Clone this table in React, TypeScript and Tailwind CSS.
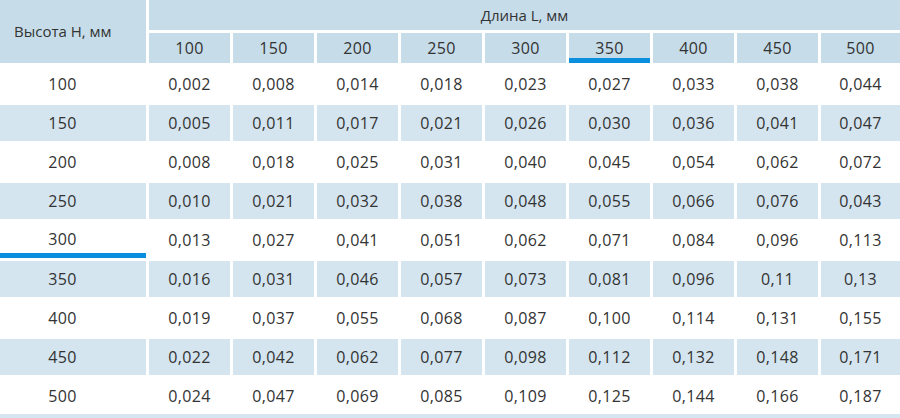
import React from "react";

const lengths = ["100", "150", "200", "250", "300", "350", "400", "450", "500"];

const rows: { h: string; v: string[] }[] = [
  { h: "100", v: ["0,002", "0,008", "0,014", "0,018", "0,023", "0,027", "0,033", "0,038", "0,044"] },
  { h: "150", v: ["0,005", "0,011", "0,017", "0,021", "0,026", "0,030", "0,036", "0,041", "0,047"] },
  { h: "200", v: ["0,008", "0,018", "0,025", "0,031", "0,040", "0,045", "0,054", "0,062", "0,072"] },
  { h: "250", v: ["0,010", "0,021", "0,032", "0,038", "0,048", "0,055", "0,066", "0,076", "0,043"] },
  { h: "300", v: ["0,013", "0,027", "0,041", "0,051", "0,062", "0,071", "0,084", "0,096", "0,113"] },
  { h: "350", v: ["0,016", "0,031", "0,046", "0,057", "0,073", "0,081", "0,096", "0,11", "0,13"] },
  { h: "400", v: ["0,019", "0,037", "0,055", "0,068", "0,087", "0,100", "0,114", "0,131", "0,155"] },
  { h: "450", v: ["0,022", "0,042", "0,062", "0,077", "0,098", "0,112", "0,132", "0,148", "0,171"] },
  { h: "500", v: ["0,024", "0,047", "0,069", "0,085", "0,109", "0,125", "0,144", "0,166", "0,187"] },
];

export default function App() {
  return (
    <div
      className="w-[900px] h-[418px] overflow-hidden bg-white text-[#333333] text-[16px] tracking-[0.4px]"
      style={{ fontFamily: '"Open Sans", "Noto Sans", sans-serif' }}
    >
      <div className="grid grid-cols-[146px_repeat(8,81px)_79px] gap-[3px] auto-rows-min">
        <div className="row-span-2 bg-[#c6dce9] flex items-center pl-[14px] text-[15px] tracking-normal">
          Высота H, мм
        </div>
        <div className="col-span-9 h-[30px] bg-[#c6dce9] flex items-center justify-center text-[15px] tracking-normal">
          Длина L, мм
        </div>
        {lengths.map((l) => (
          <div
            key={l}
            className={
              l === "350"
                ? "h-[30px] bg-[#c6dce9] flex items-center justify-center border-b-[5px] border-[#0a8fdf] pt-[5px]"
                : "h-[30px] bg-[#c6dce9] flex items-center justify-center"
            }
          >
            {l}
          </div>
        ))}
        {rows.map((r, i) => {
          const shaded = i % 2 === 1;
          const bg = shaded ? "bg-[#d4e5ef]" : "bg-white";
          return (
            <React.Fragment key={r.h}>
              <div
                className={
                  r.h === "300"
                    ? `h-[36px] ${bg} flex items-center justify-center pr-[21px] border-b-[5px] border-[#0a8fdf] pt-[3px]`
                    : `h-[36px] ${bg} flex items-center justify-center pr-[21px]`
                }
              >
                {r.h}
              </div>
              {r.v.map((v, j) => (
                <div key={j} className={`h-[36px] ${bg} flex items-center justify-center`}>
                  {v}
                </div>
              ))}
            </React.Fragment>
          );
        })}
      </div>
      <div className="h-[4px] bg-[#d6e6f0]" />
    </div>
  );
}
